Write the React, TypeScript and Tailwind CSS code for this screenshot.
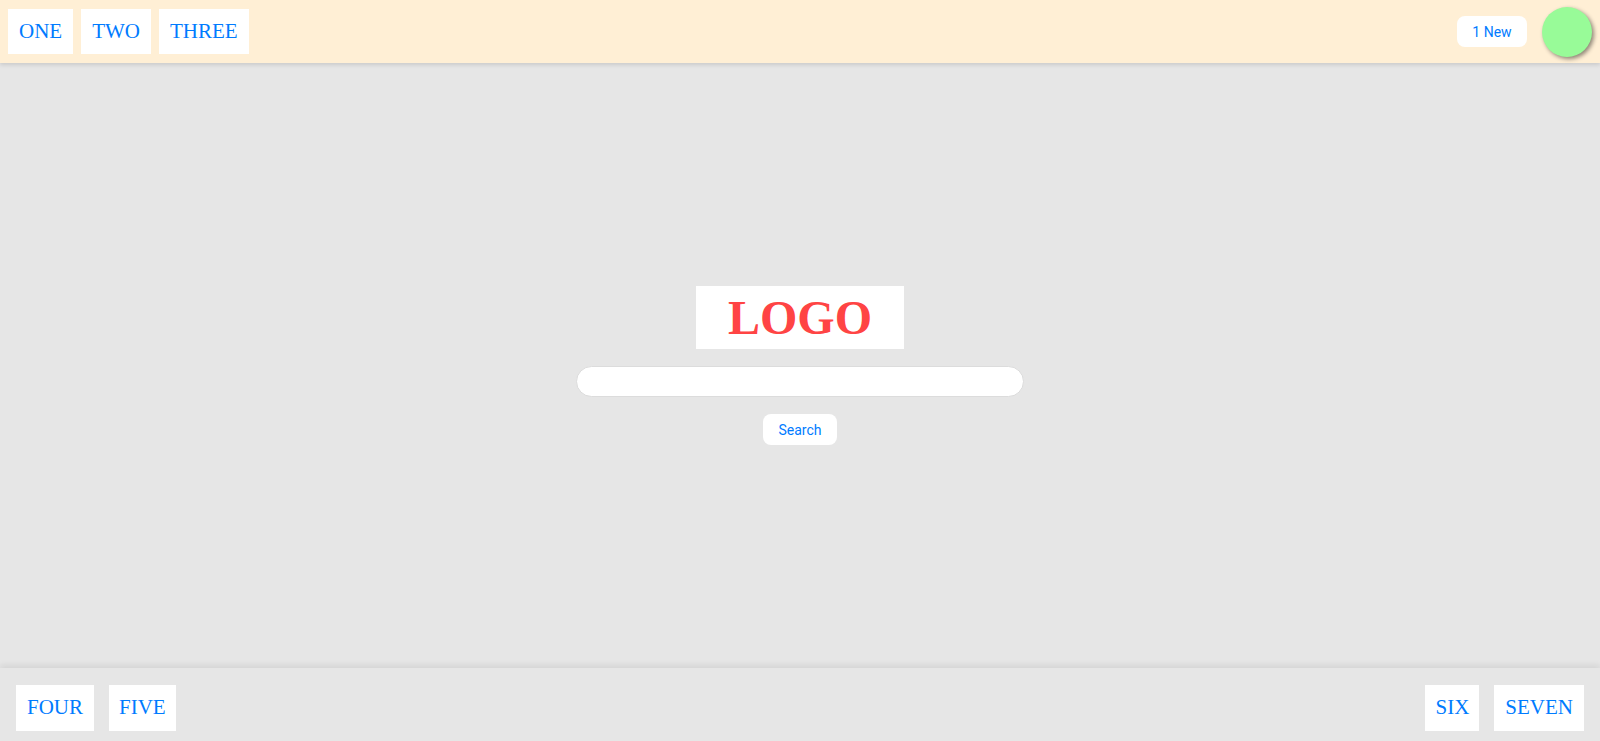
import React from 'react';

const serif = "font-['Liberation_Serif',serif]";

const NavButton: React.FC<{ label: string; className?: string }> = ({ label, className = '' }) => (
  <button className={`bg-white text-[21px] text-[#007bff] ${serif} ${className}`}>{label}</button>
);

const App: React.FC = () => {
  return (
    <div className="flex flex-col h-screen bg-[#e6e6e6] overflow-hidden">
      {/* Header */}
      <header className="relative z-10 flex items-center justify-between h-[63px] px-2 bg-[#ffefd5] shadow-[0_2px_4px_rgba(0,0,0,0.12)]">
        <div className="flex gap-2">
          <NavButton label="ONE" className="h-[45px] px-[11px]" />
          <NavButton label="TWO" className="h-[45px] px-[11px]" />
          <NavButton label="THREE" className="h-[45px] px-[11px]" />
        </div>
        <div className="flex items-center gap-[15px]">
          <button className="h-[31px] w-[70px] rounded-lg bg-white text-sm text-[#007bff] font-['Roboto',sans-serif]">
            1 New
          </button>
          <div className="h-[50px] w-[50px] rounded-full bg-[#98fb98] shadow-[2px_2px_4px_rgba(0,0,0,0.45)]" />
        </div>
      </header>

      {/* Main */}
      <main className="flex-1 flex flex-col items-center justify-center gap-[17px]">
        <div className="flex items-center justify-center h-[63px] w-[208px] bg-white">
          <span className={`text-[48px] font-bold text-[#ff4444] ${serif}`}>LOGO</span>
        </div>
        <input
          type="text"
          className="h-[31px] w-[448px] rounded-full border border-[#dcdcdc] bg-white px-4 outline-none"
        />
        <button className="h-[31px] w-[74px] rounded-lg bg-white text-sm text-[#007bff] font-['Roboto',sans-serif]">
          Search
        </button>
      </main>

      {/* Footer */}
      <footer className="flex items-end justify-between h-[73px] px-4 pb-[10px] bg-[#e6e6e6] shadow-[0_-3px_6px_rgba(0,0,0,0.08)]">
        <div className="flex gap-[15px]">
          <NavButton label="FOUR" className="h-[46px] px-[11px]" />
          <NavButton label="FIVE" className="h-[46px] px-[10px]" />
        </div>
        <div className="flex gap-[15px]">
          <NavButton label="SIX" className="h-[46px] px-[10px]" />
          <NavButton label="SEVEN" className="h-[46px] px-[11px]" />
        </div>
      </footer>
    </div>
  );
};

export default App;
